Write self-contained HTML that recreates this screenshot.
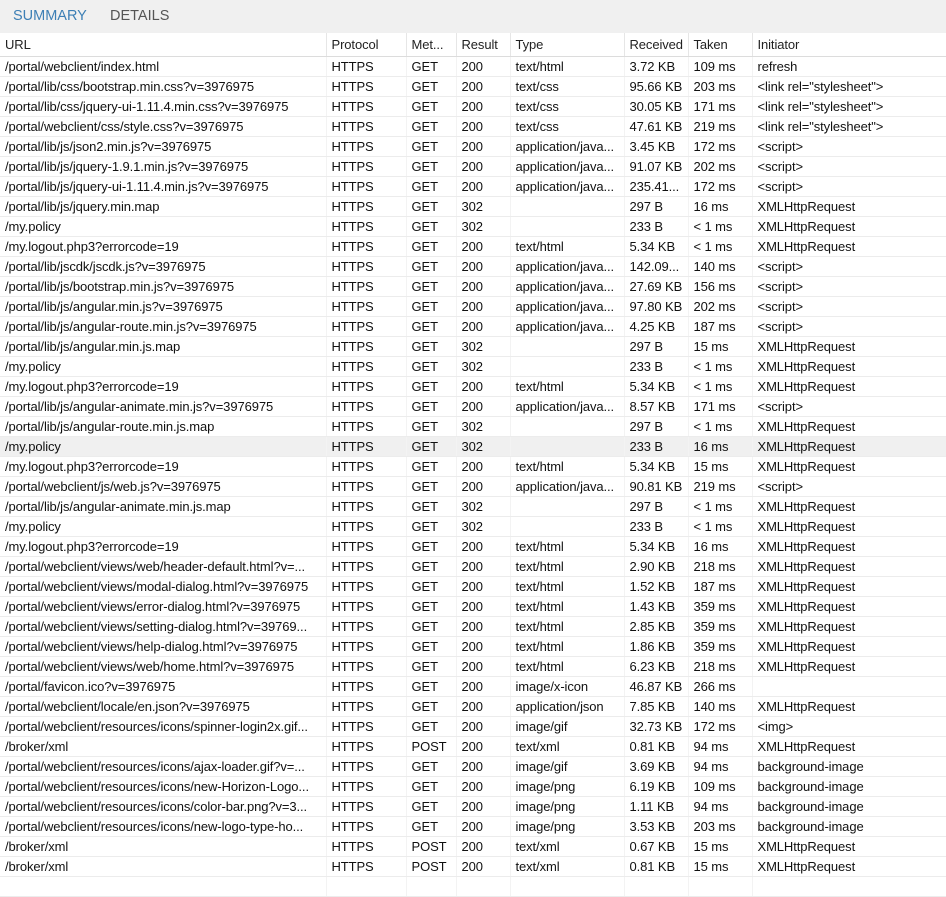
<!DOCTYPE html>
<html><head><meta charset="utf-8"><style>
*{margin:0;padding:0;box-sizing:border-box}
body{width:946px;height:885px;background:#fff;font-family:"Liberation Sans",sans-serif;font-size:13px;color:#111;overflow:hidden}
.tabs{height:33px;background:#f0f0f0;position:relative}
.tabs span{position:absolute;top:8px;font-size:14.5px;color:#555}
.tabs .a{left:13px;color:#3d7fb5}
.tabs .b{left:110px}
table{border-collapse:collapse;table-layout:fixed;width:946px}
td,th{height:20px;padding:0 0 0 5px;white-space:nowrap;overflow:hidden;text-overflow:clip;border-bottom:1px solid #ececec;border-right:1px solid #f3f3f3;text-align:left;font-weight:normal;line-height:19px;letter-spacing:-0.1px}
th{height:23px;padding-top:1px;border-bottom:1px solid #dcdcdc;border-right:1px solid #e6e6e6;color:#222}
td:last-child,th:last-child{border-right:none}
tr.h td{background:#f0f0f0}
</style></head><body>
<div class="tabs"><span class="a">SUMMARY</span><span class="b">DETAILS</span></div>
<table>
<colgroup><col style="width:326px"><col style="width:80px"><col style="width:50px"><col style="width:54px"><col style="width:114px"><col style="width:64px"><col style="width:64px"><col style="width:194px"></colgroup>
<tr><th>URL</th><th>Protocol</th><th>Met...</th><th>Result</th><th>Type</th><th>Received</th><th>Taken</th><th>Initiator</th></tr>
<tr><td>/portal/webclient/index.html</td><td>HTTPS</td><td>GET</td><td>200</td><td>text/html</td><td>3.72 KB</td><td>109 ms</td><td>refresh</td></tr>
<tr><td>/portal/lib/css/bootstrap.min.css?v=3976975</td><td>HTTPS</td><td>GET</td><td>200</td><td>text/css</td><td>95.66 KB</td><td>203 ms</td><td>&lt;link rel="stylesheet"&gt;</td></tr>
<tr><td>/portal/lib/css/jquery-ui-1.11.4.min.css?v=3976975</td><td>HTTPS</td><td>GET</td><td>200</td><td>text/css</td><td>30.05 KB</td><td>171 ms</td><td>&lt;link rel="stylesheet"&gt;</td></tr>
<tr><td>/portal/webclient/css/style.css?v=3976975</td><td>HTTPS</td><td>GET</td><td>200</td><td>text/css</td><td>47.61 KB</td><td>219 ms</td><td>&lt;link rel="stylesheet"&gt;</td></tr>
<tr><td>/portal/lib/js/json2.min.js?v=3976975</td><td>HTTPS</td><td>GET</td><td>200</td><td>application/java...</td><td>3.45 KB</td><td>172 ms</td><td>&lt;script&gt;</td></tr>
<tr><td>/portal/lib/js/jquery-1.9.1.min.js?v=3976975</td><td>HTTPS</td><td>GET</td><td>200</td><td>application/java...</td><td>91.07 KB</td><td>202 ms</td><td>&lt;script&gt;</td></tr>
<tr><td>/portal/lib/js/jquery-ui-1.11.4.min.js?v=3976975</td><td>HTTPS</td><td>GET</td><td>200</td><td>application/java...</td><td>235.41...</td><td>172 ms</td><td>&lt;script&gt;</td></tr>
<tr><td>/portal/lib/js/jquery.min.map</td><td>HTTPS</td><td>GET</td><td>302</td><td></td><td>297 B</td><td>16 ms</td><td>XMLHttpRequest</td></tr>
<tr><td>/my.policy</td><td>HTTPS</td><td>GET</td><td>302</td><td></td><td>233 B</td><td>&lt; 1 ms</td><td>XMLHttpRequest</td></tr>
<tr><td>/my.logout.php3?errorcode=19</td><td>HTTPS</td><td>GET</td><td>200</td><td>text/html</td><td>5.34 KB</td><td>&lt; 1 ms</td><td>XMLHttpRequest</td></tr>
<tr><td>/portal/lib/jscdk/jscdk.js?v=3976975</td><td>HTTPS</td><td>GET</td><td>200</td><td>application/java...</td><td>142.09...</td><td>140 ms</td><td>&lt;script&gt;</td></tr>
<tr><td>/portal/lib/js/bootstrap.min.js?v=3976975</td><td>HTTPS</td><td>GET</td><td>200</td><td>application/java...</td><td>27.69 KB</td><td>156 ms</td><td>&lt;script&gt;</td></tr>
<tr><td>/portal/lib/js/angular.min.js?v=3976975</td><td>HTTPS</td><td>GET</td><td>200</td><td>application/java...</td><td>97.80 KB</td><td>202 ms</td><td>&lt;script&gt;</td></tr>
<tr><td>/portal/lib/js/angular-route.min.js?v=3976975</td><td>HTTPS</td><td>GET</td><td>200</td><td>application/java...</td><td>4.25 KB</td><td>187 ms</td><td>&lt;script&gt;</td></tr>
<tr><td>/portal/lib/js/angular.min.js.map</td><td>HTTPS</td><td>GET</td><td>302</td><td></td><td>297 B</td><td>15 ms</td><td>XMLHttpRequest</td></tr>
<tr><td>/my.policy</td><td>HTTPS</td><td>GET</td><td>302</td><td></td><td>233 B</td><td>&lt; 1 ms</td><td>XMLHttpRequest</td></tr>
<tr><td>/my.logout.php3?errorcode=19</td><td>HTTPS</td><td>GET</td><td>200</td><td>text/html</td><td>5.34 KB</td><td>&lt; 1 ms</td><td>XMLHttpRequest</td></tr>
<tr><td>/portal/lib/js/angular-animate.min.js?v=3976975</td><td>HTTPS</td><td>GET</td><td>200</td><td>application/java...</td><td>8.57 KB</td><td>171 ms</td><td>&lt;script&gt;</td></tr>
<tr><td>/portal/lib/js/angular-route.min.js.map</td><td>HTTPS</td><td>GET</td><td>302</td><td></td><td>297 B</td><td>&lt; 1 ms</td><td>XMLHttpRequest</td></tr>
<tr class="h"><td>/my.policy</td><td>HTTPS</td><td>GET</td><td>302</td><td></td><td>233 B</td><td>16 ms</td><td>XMLHttpRequest</td></tr>
<tr><td>/my.logout.php3?errorcode=19</td><td>HTTPS</td><td>GET</td><td>200</td><td>text/html</td><td>5.34 KB</td><td>15 ms</td><td>XMLHttpRequest</td></tr>
<tr><td>/portal/webclient/js/web.js?v=3976975</td><td>HTTPS</td><td>GET</td><td>200</td><td>application/java...</td><td>90.81 KB</td><td>219 ms</td><td>&lt;script&gt;</td></tr>
<tr><td>/portal/lib/js/angular-animate.min.js.map</td><td>HTTPS</td><td>GET</td><td>302</td><td></td><td>297 B</td><td>&lt; 1 ms</td><td>XMLHttpRequest</td></tr>
<tr><td>/my.policy</td><td>HTTPS</td><td>GET</td><td>302</td><td></td><td>233 B</td><td>&lt; 1 ms</td><td>XMLHttpRequest</td></tr>
<tr><td>/my.logout.php3?errorcode=19</td><td>HTTPS</td><td>GET</td><td>200</td><td>text/html</td><td>5.34 KB</td><td>16 ms</td><td>XMLHttpRequest</td></tr>
<tr><td>/portal/webclient/views/web/header-default.html?v=...</td><td>HTTPS</td><td>GET</td><td>200</td><td>text/html</td><td>2.90 KB</td><td>218 ms</td><td>XMLHttpRequest</td></tr>
<tr><td>/portal/webclient/views/modal-dialog.html?v=3976975</td><td>HTTPS</td><td>GET</td><td>200</td><td>text/html</td><td>1.52 KB</td><td>187 ms</td><td>XMLHttpRequest</td></tr>
<tr><td>/portal/webclient/views/error-dialog.html?v=3976975</td><td>HTTPS</td><td>GET</td><td>200</td><td>text/html</td><td>1.43 KB</td><td>359 ms</td><td>XMLHttpRequest</td></tr>
<tr><td>/portal/webclient/views/setting-dialog.html?v=39769...</td><td>HTTPS</td><td>GET</td><td>200</td><td>text/html</td><td>2.85 KB</td><td>359 ms</td><td>XMLHttpRequest</td></tr>
<tr><td>/portal/webclient/views/help-dialog.html?v=3976975</td><td>HTTPS</td><td>GET</td><td>200</td><td>text/html</td><td>1.86 KB</td><td>359 ms</td><td>XMLHttpRequest</td></tr>
<tr><td>/portal/webclient/views/web/home.html?v=3976975</td><td>HTTPS</td><td>GET</td><td>200</td><td>text/html</td><td>6.23 KB</td><td>218 ms</td><td>XMLHttpRequest</td></tr>
<tr><td>/portal/favicon.ico?v=3976975</td><td>HTTPS</td><td>GET</td><td>200</td><td>image/x-icon</td><td>46.87 KB</td><td>266 ms</td><td></td></tr>
<tr><td>/portal/webclient/locale/en.json?v=3976975</td><td>HTTPS</td><td>GET</td><td>200</td><td>application/json</td><td>7.85 KB</td><td>140 ms</td><td>XMLHttpRequest</td></tr>
<tr><td>/portal/webclient/resources/icons/spinner-login2x.gif...</td><td>HTTPS</td><td>GET</td><td>200</td><td>image/gif</td><td>32.73 KB</td><td>172 ms</td><td>&lt;img&gt;</td></tr>
<tr><td>/broker/xml</td><td>HTTPS</td><td>POST</td><td>200</td><td>text/xml</td><td>0.81 KB</td><td>94 ms</td><td>XMLHttpRequest</td></tr>
<tr><td>/portal/webclient/resources/icons/ajax-loader.gif?v=...</td><td>HTTPS</td><td>GET</td><td>200</td><td>image/gif</td><td>3.69 KB</td><td>94 ms</td><td>background-image</td></tr>
<tr><td>/portal/webclient/resources/icons/new-Horizon-Logo...</td><td>HTTPS</td><td>GET</td><td>200</td><td>image/png</td><td>6.19 KB</td><td>109 ms</td><td>background-image</td></tr>
<tr><td>/portal/webclient/resources/icons/color-bar.png?v=3...</td><td>HTTPS</td><td>GET</td><td>200</td><td>image/png</td><td>1.11 KB</td><td>94 ms</td><td>background-image</td></tr>
<tr><td>/portal/webclient/resources/icons/new-logo-type-ho...</td><td>HTTPS</td><td>GET</td><td>200</td><td>image/png</td><td>3.53 KB</td><td>203 ms</td><td>background-image</td></tr>
<tr><td>/broker/xml</td><td>HTTPS</td><td>POST</td><td>200</td><td>text/xml</td><td>0.67 KB</td><td>15 ms</td><td>XMLHttpRequest</td></tr>
<tr><td>/broker/xml</td><td>HTTPS</td><td>POST</td><td>200</td><td>text/xml</td><td>0.81 KB</td><td>15 ms</td><td>XMLHttpRequest</td></tr>
<tr><td></td><td></td><td></td><td></td><td></td><td></td><td></td><td></td></tr>
</table>
</body></html>
